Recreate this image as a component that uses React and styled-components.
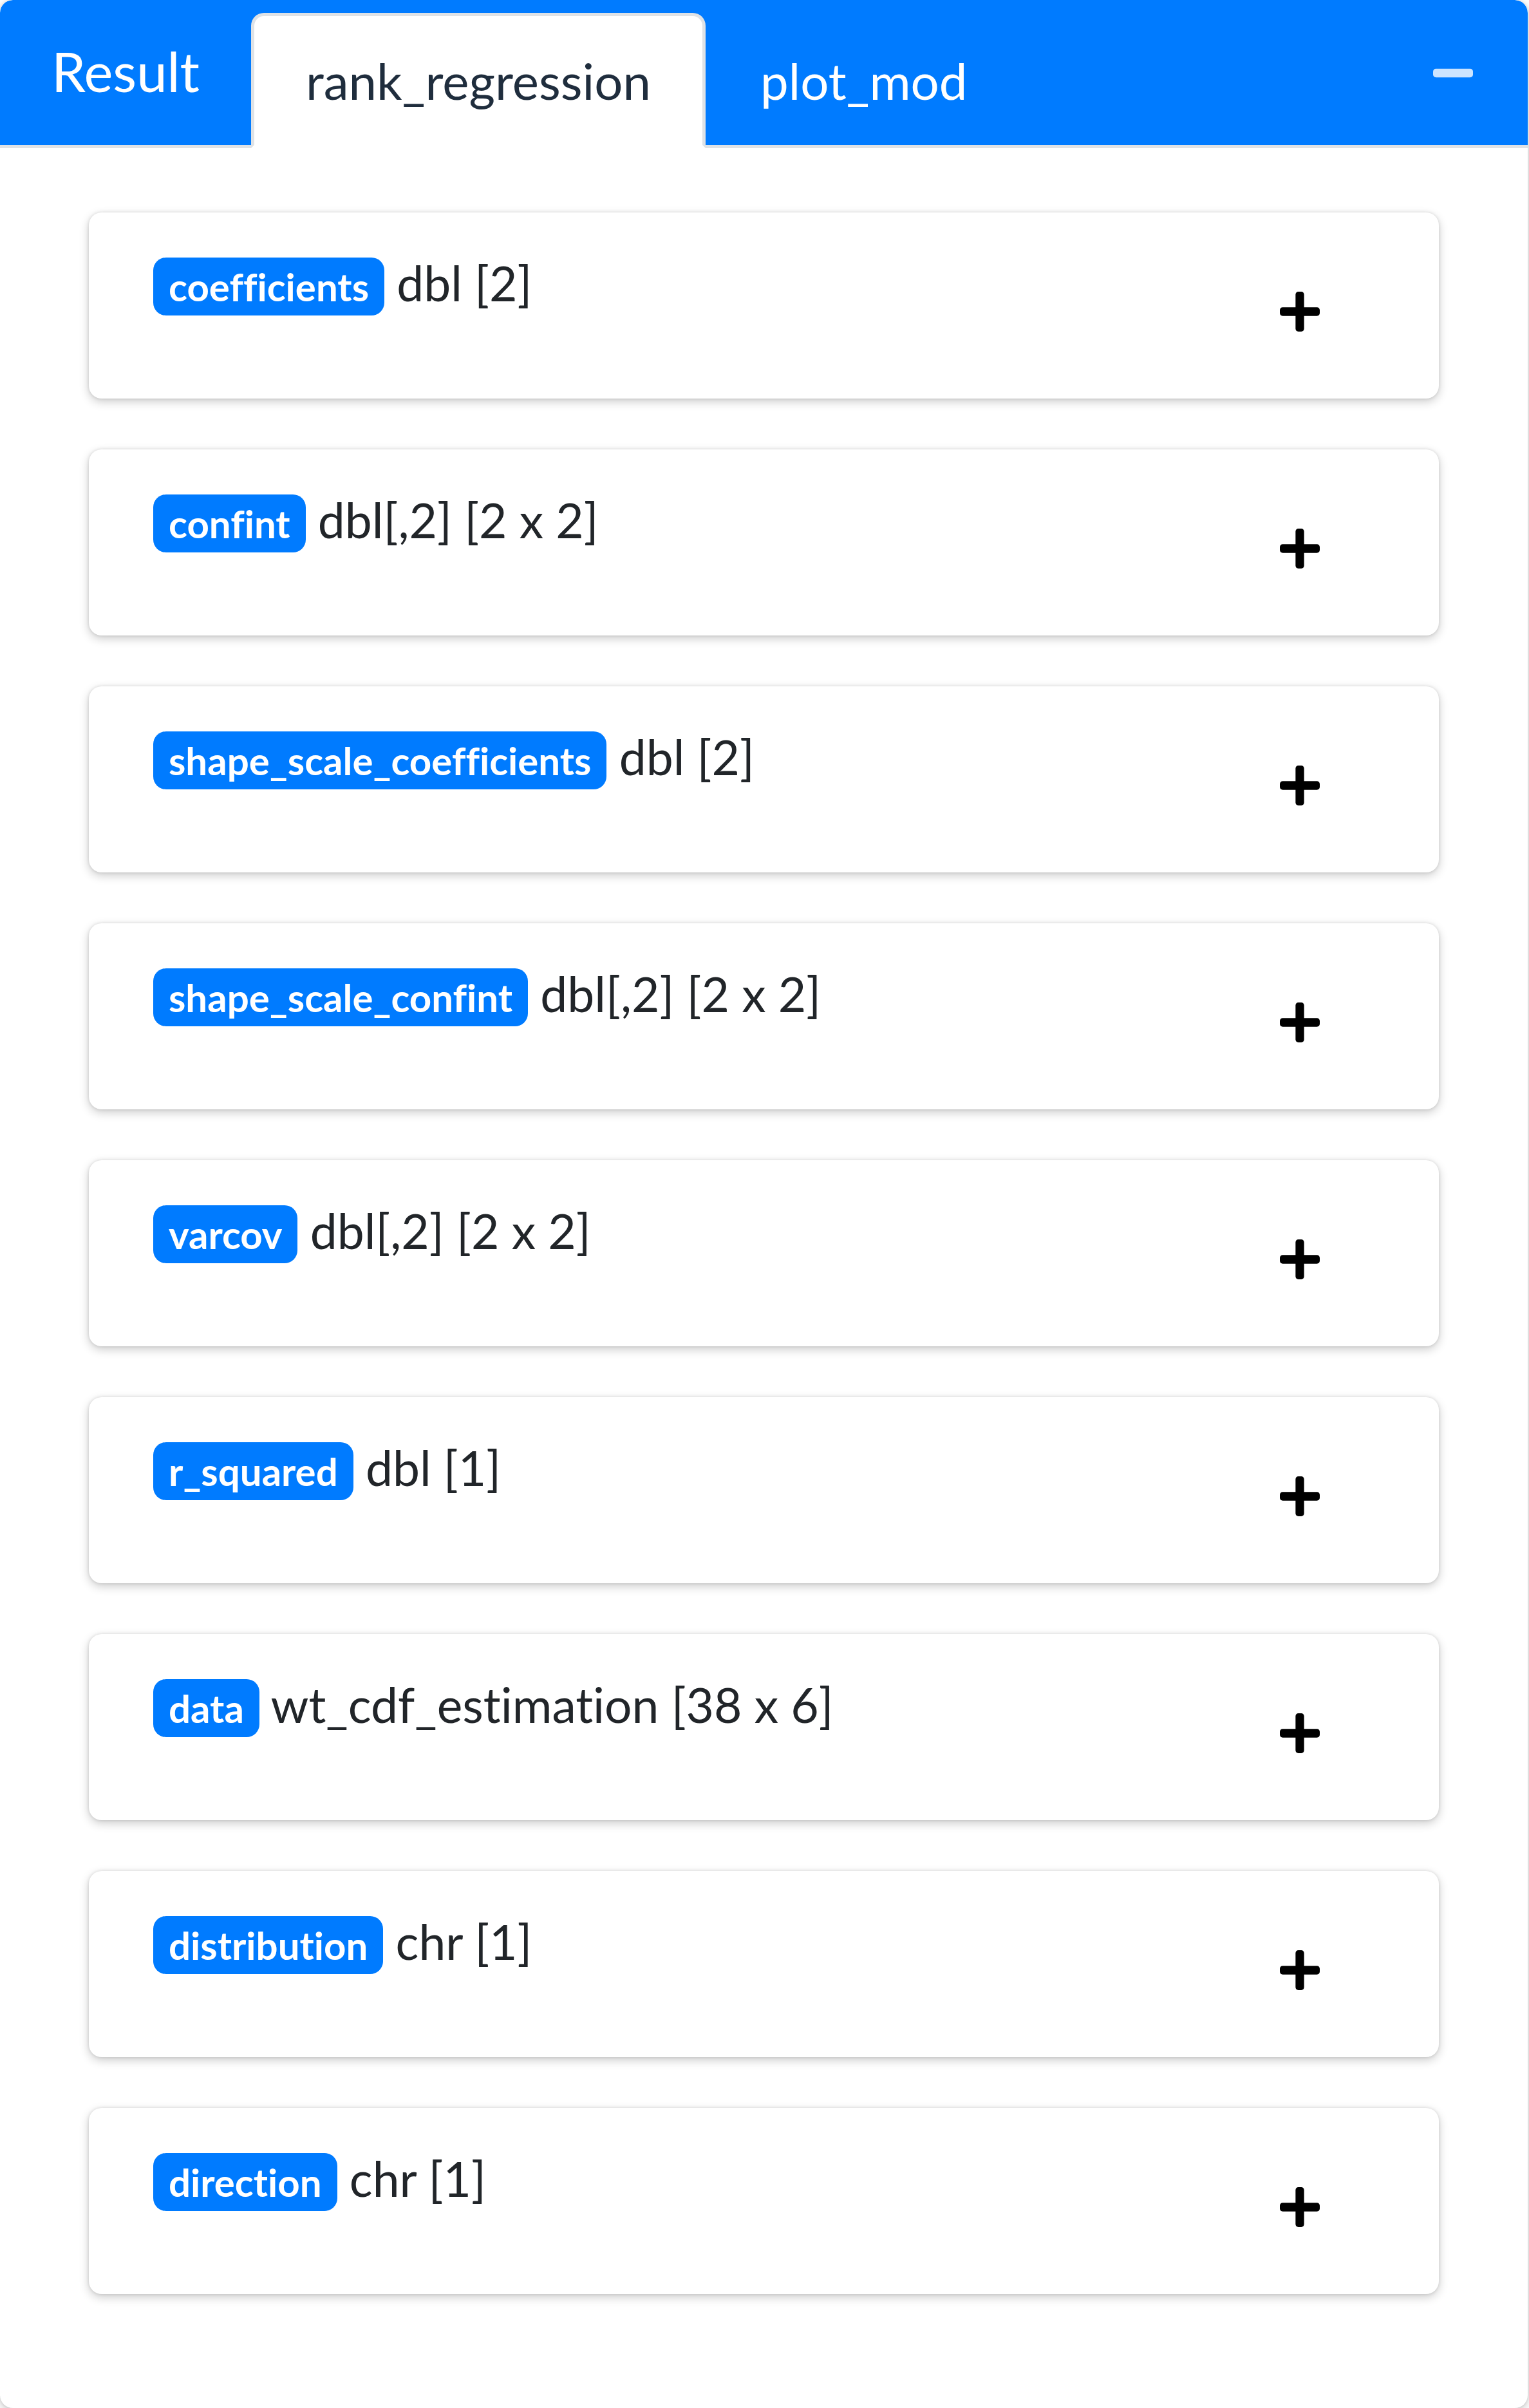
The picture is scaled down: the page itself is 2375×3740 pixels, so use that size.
import React from "react";
import styled, { createGlobalStyle } from "styled-components";

const GlobalStyle = createGlobalStyle`
  html, body { margin: 0; padding: 0; background: #ffffff; }
  body {
    font-family: Lato, "Open Sans", "Liberation Sans", sans-serif;
    color: #212529;
    font-variant-ligatures: no-common-ligatures;
  }
  * { box-sizing: border-box; }
`;

const OuterCard = styled.div`
  width: 2373px;
  height: 3740px;
  background: #ffffff;
  border-radius: 20px;
  box-shadow: 0 0 5px rgba(0, 0, 0, 0.125), 0 5px 15px rgba(0, 0, 0, 0.2);
  display: flex;
  flex-direction: column;
  overflow: hidden;
`;

const Header = styled.div`
  height: 230px;
  background: #007bff;
  border-bottom: 5px solid #dee2e6;
  border-radius: 20px 20px 0 0;
  display: flex;
  align-items: flex-start;
  padding-top: 20px;
`;

const HeaderTitle = styled.div`
  flex: 0 0 390px;
  padding-left: 80px;
  margin-top: 40px;
  font-size: 85px;
  line-height: 100px;
  color: #ffffff;
  font-weight: 400;
`;

const TabList = styled.div`
  display: flex;
  align-items: flex-start;
`;

const Tab = styled.div`
  height: 210px;
  padding: 40px 80px;
  font-size: 78px;
  line-height: 120px;
  border: 5px solid ${(p) => (p.$active ? "#dee2e6" : "transparent")};
  border-bottom: 5px solid ${(p) => (p.$active ? "#ffffff" : "transparent")};
  border-radius: 20px 20px 0 0;
  background: ${(p) => (p.$active ? "#ffffff" : "transparent")};
  color: ${(p) => (p.$active ? "#1f2d3d" : "#ffffff")};
  white-space: nowrap;
`;

const Tools = styled.div`
  margin-left: auto;
  margin-top: 58px;
  padding-right: 85px;
  display: flex;
`;

const Body = styled.div`
  padding: 100px 138px;
  display: flex;
  flex-direction: column;
`;

const ItemCard = styled.div`
  height: 289px;
  margin-bottom: 79px;
  background: #ffffff;
  border-radius: 20px;
  box-shadow: 0 0 5px rgba(0, 0, 0, 0.125), 0 5px 15px rgba(0, 0, 0, 0.2);
  display: flex;
  align-items: flex-start;
  justify-content: space-between;
  padding-left: 100px;
`;

const ItemTitle = styled.div`
  margin-top: 49px;
  font-size: 75px;
  line-height: 120px;
  color: #212529;
  white-space: nowrap;
`;

const Badge = styled.span`
  display: inline-block;
  font-size: 60px;
  font-weight: 700;
  line-height: 1;
  padding: 15px 24px;
  border-radius: 20px;
  background: #007bff;
  color: #ffffff;
  vertical-align: baseline;
`;

const ToolButton = styled.div`
  margin-top: 123px;
  margin-right: 185px;
  display: flex;
`;

const PlusIcon = () => (
  <svg width="62" height="62" viewBox="0 32 448 448" fill="#000000">
    <path d="M416 208H272V64c0-17.67-14.33-32-32-32h-32c-17.67 0-32 14.33-32 32v144H32c-17.67 0-32 14.33-32 32v32c0 17.67 14.33 32 32 32h144v144c0 17.67 14.33 32 32 32h32c17.67 0 32-14.33 32-32V304h144c17.67 0 32-14.33 32-32v-32c0-17.67-14.33-32-32-32z" />
  </svg>
);

const MinusIcon = () => (
  <svg width="62" height="71" viewBox="0 0 448 512" fill="rgba(255,255,255,0.8)">
    <path d="M416 208H32c-17.67 0-32 14.33-32 32v32c0 17.67 14.33 32 32 32h384c17.67 0 32-14.33 32-32v-32c0-17.67-14.33-32-32-32z" />
  </svg>
);

const items = [
  { name: "coefficients", desc: "dbl [2]" },
  { name: "confint", desc: "dbl[,2] [2 x 2]" },
  { name: "shape_scale_coefficients", desc: "dbl [2]" },
  { name: "shape_scale_confint", desc: "dbl[,2] [2 x 2]" },
  { name: "varcov", desc: "dbl[,2] [2 x 2]" },
  { name: "r_squared", desc: "dbl [1]" },
  { name: "data", desc: "wt_cdf_estimation [38 x 6]" },
  { name: "distribution", desc: "chr [1]" },
  { name: "direction", desc: "chr [1]" },
];

export default function App() {
  return (
    <>
      <GlobalStyle />
      <OuterCard>
        <Header>
          <HeaderTitle>Result</HeaderTitle>
          <TabList>
            <Tab $active>rank_regression</Tab>
            <Tab>plot_mod</Tab>
          </TabList>
          <Tools>
            <MinusIcon />
          </Tools>
        </Header>
        <Body>
          {items.map((it) => (
            <ItemCard key={it.name}>
              <ItemTitle>
                <Badge>{it.name}</Badge> {it.desc}
              </ItemTitle>
              <ToolButton>
                <PlusIcon />
              </ToolButton>
            </ItemCard>
          ))}
        </Body>
      </OuterCard>
    </>
  );
}
